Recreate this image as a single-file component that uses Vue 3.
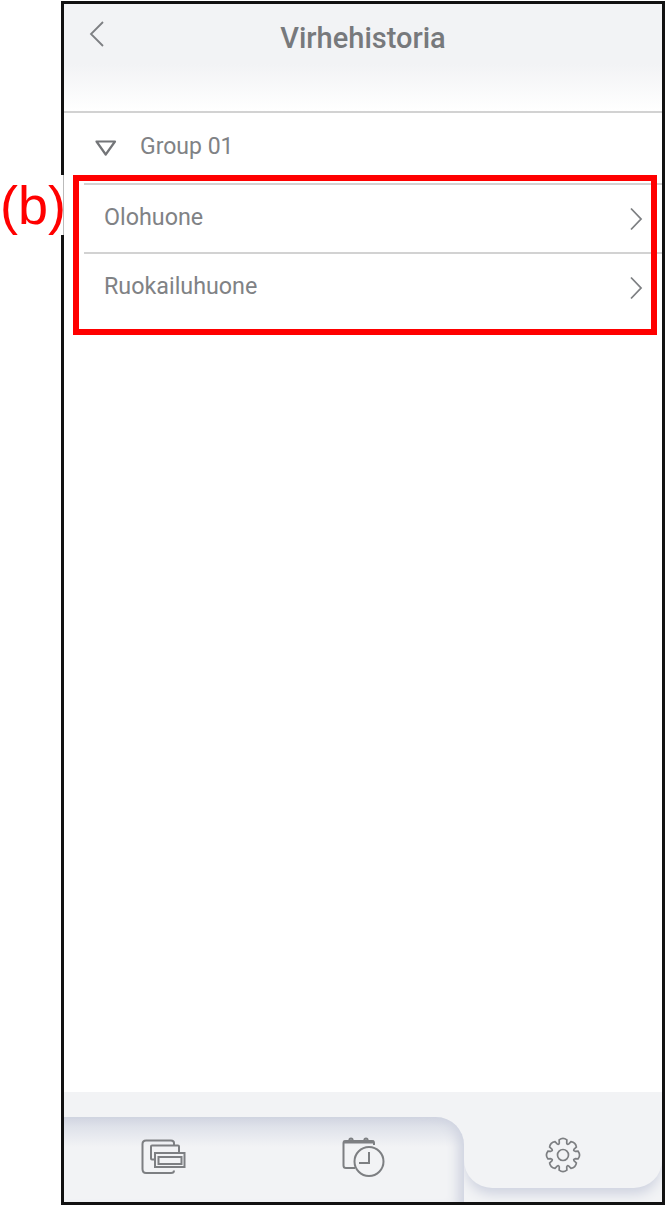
<template>
  <div class="page">
    <div class="phone">
      <header class="topbar">
        <button class="back" type="button" aria-label="Takaisin">
          <svg width="18" height="28" viewBox="0 0 18 28">
            <path d="M15 2 L3 14 L15 26" class="line" />
          </svg>
        </button>
        <h1>Virhehistoria</h1>
      </header>

      <main class="content">
        <div class="group">
          <svg class="caret" width="24" height="18" viewBox="0 0 24 18">
            <path d="M2.5 2.5 H21 L11.7 15.5 Z" class="tri" />
          </svg>
          <span>Group 01</span>
        </div>
        <ul class="rooms">
          <li v-for="room in rooms" :key="room" class="room">
            <span>{{ room }}</span>
            <svg width="14" height="24" viewBox="0 0 14 24">
              <path d="M2 1.5 L12 12 L2 22.5" class="line" />
            </svg>
          </li>
        </ul>
      </main>

      <nav class="tabbar">
        <div class="tabs-left">
          <div class="tab">
            <svg width="46" height="36" viewBox="0 0 46 36">
              <path d="M33 6 V4 Q33 1.500 30 1.500 H5 Q1.500 1.500 1.500 5 V30 Q1.500 34 5 34 H30 Q33 34 33 31.500" class="icon" />
              <rect x="10" y="6.500" width="28" height="14" rx="1" class="icon" />
              <rect x="14" y="14" width="29.500" height="14" class="icon fill" />
              <rect x="17.500" y="18" width="23" height="7" class="icon" />
            </svg>
          </div>
          <div class="tab">
            <svg width="44" height="40" viewBox="0 0 44 40">
              <path d="M13 31 H4 Q1.500 31 1.500 28.500 V6 Q1.500 4 4 4 H30 Q32 4 32 6 V8" class="icon" />
              <path d="M1.500 5 H32" class="icon thick" />
              <circle cx="9" cy="3" r="1.600" class="icon" />
              <circle cx="24" cy="3" r="1.600" class="icon" />
              <circle cx="27" cy="24.500" r="14.500" class="icon fill" />
              <path d="M27 15 V26 H17" class="icon" />
            </svg>
          </div>
        </div>
        <div class="tab tab-active">
          <svg width="36" height="36" viewBox="-18 -18 36 36">
            <path :d="gearPath" class="icon gear" />
            <circle r="5.500" class="icon gear" />
          </svg>
        </div>
      </nav>
    </div>

    <div class="callout"></div>
    <div class="callout-label">(b)</div>
  </div>
</template>

<script setup>
const rooms = ['Olohuone', 'Ruokailuhuone']

// 8-tooth gear outline
const gearPoints = []
for (let i = 0; i < 8; i++) {
  const a = (i * Math.PI) / 4 - Math.PI / 2
  const pt = (r, off) => `${(r * Math.cos(a + off)).toFixed(2)} ${(r * Math.sin(a + off)).toFixed(2)}`
  gearPoints.push(`${i === 0 ? 'M' : 'Q' + pt(10.8, -Math.PI / 8)} ${pt(12.6, -0.3)}`)
  gearPoints.push(`L${pt(15.6, -0.25)}`)
  gearPoints.push(`Q${pt(18, 0)} ${pt(15.6, 0.25)}`)
  gearPoints.push(`L${pt(12.6, 0.3)}`)
}
const a0 = -Math.PI / 2
const close = `Q${(10.8 * Math.cos(a0 - Math.PI / 8)).toFixed(2)} ${(10.8 * Math.sin(a0 - Math.PI / 8)).toFixed(2)} ${(12.6 * Math.cos(a0 - 0.3)).toFixed(2)} ${(12.6 * Math.sin(a0 - 0.3)).toFixed(2)}`
const gearPath = gearPoints.join(' ') + ' ' + close + ' Z'
</script>

<style>
html,
body {
  margin: 0;
  background: #fff;
}
</style>

<style scoped>
.page {
  position: relative;
  width: 667px;
  height: 1209px;
  overflow: hidden;
  padding: 1px 0 0 61px;
  box-sizing: border-box;
  font-family: Roboto, "Liberation Sans", sans-serif;
  color: #808285;
}

.phone {
  width: 604px;
  height: 1204px;
  box-sizing: border-box;
  border: 3px solid #111;
  display: flex;
  flex-direction: column;
  background: #fff;
}

.topbar {
  height: 107px;
  flex: none;
  display: flex;
  justify-content: center;
  background: linear-gradient(#f2f3f5 0, #f2f3f5 60px, #fff 107px);
  border-bottom: 2px solid #d2d2d2;
  position: relative;
}

.topbar h1 {
  margin: 15px 0 0;
  font-size: 29px;
  line-height: 38px;
  font-weight: 500;
  color: #77797c;
}

.back {
  position: absolute;
  left: 24px;
  top: 16px;
  padding: 0;
  border: 0;
  background: none;
  line-height: 0;
}

.line {
  fill: none;
  stroke: #7d7f82;
  stroke-width: 1.8;
}

.content {
  flex: 1;
}

.group {
  height: 70px;
  display: flex;
  align-items: center;
  padding-left: 30px;
  gap: 22px;
  font-size: 23px;
}

.group span {
  padding-bottom: 4px;
}

.caret {
  flex: none;
}

.tri {
  fill: none;
  stroke: #737578;
  stroke-width: 2.2;
  stroke-linejoin: round;
}

.rooms {
  list-style: none;
  margin: 0 0 0 20px;
  padding: 0;
}

.room {
  height: 68px;
  box-sizing: content-box;
  border-top: 2px solid #d2d2d2;
  margin-bottom: -1px;
  display: flex;
  align-items: center;
  justify-content: space-between;
  padding: 0 19px 0 20px;
  font-size: 23.3px;
}

.room span {
  padding-bottom: 4px;
}

.tabbar {
  height: 110px;
  flex: none;
  display: flex;
  background: #f2f3f5;
  overflow: hidden;
  position: relative;
}

.tabs-left {
  width: 400px;
  margin-top: 25px;
  display: flex;
  border-top-right-radius: 28px;
  background: linear-gradient(#d0d4e0 0, #dfe2ea 10px, #f2f3f5 30px);
  box-shadow: inset -14px 0 12px -8px #cfd3e0;
}

.tab {
  display: flex;
  align-items: center;
  justify-content: center;
}

.tabs-left .tab {
  width: 200px;
  padding-bottom: 6px;
}

.tab-active {
  flex: 1;
  height: 96px;
  padding-top: 30px;
  box-sizing: border-box;
  background: #f2f3f5;
  border-radius: 0 0 28px 28px;
  box-shadow: 0 8px 12px -2px #cfd3e0;
  clip-path: inset(0 0 -30px 0);
  position: relative;
}

.icon {
  fill: none;
  stroke: #7d7f82;
  stroke-width: 2;
}

.gear {
  stroke-width: 1.7;
}

.fill {
  fill: #f2f3f5;
}

.thick {
  stroke-width: 3;
}

.callout {
  position: absolute;
  left: 73px;
  top: 175px;
  width: 584px;
  height: 160px;
  box-sizing: border-box;
  border: 6px solid #f00;
}

.callout-label {
  position: absolute;
  left: 0;
  top: 175px;
  width: 64px;
  height: 60px;
  background: #fff;
  color: #f00;
  font-family: "Liberation Sans", sans-serif;
  font-size: 54px;
  line-height: 60px;
  border-right: 1px solid #bbb;
  box-sizing: border-box;
  white-space: nowrap;
}
</style>
